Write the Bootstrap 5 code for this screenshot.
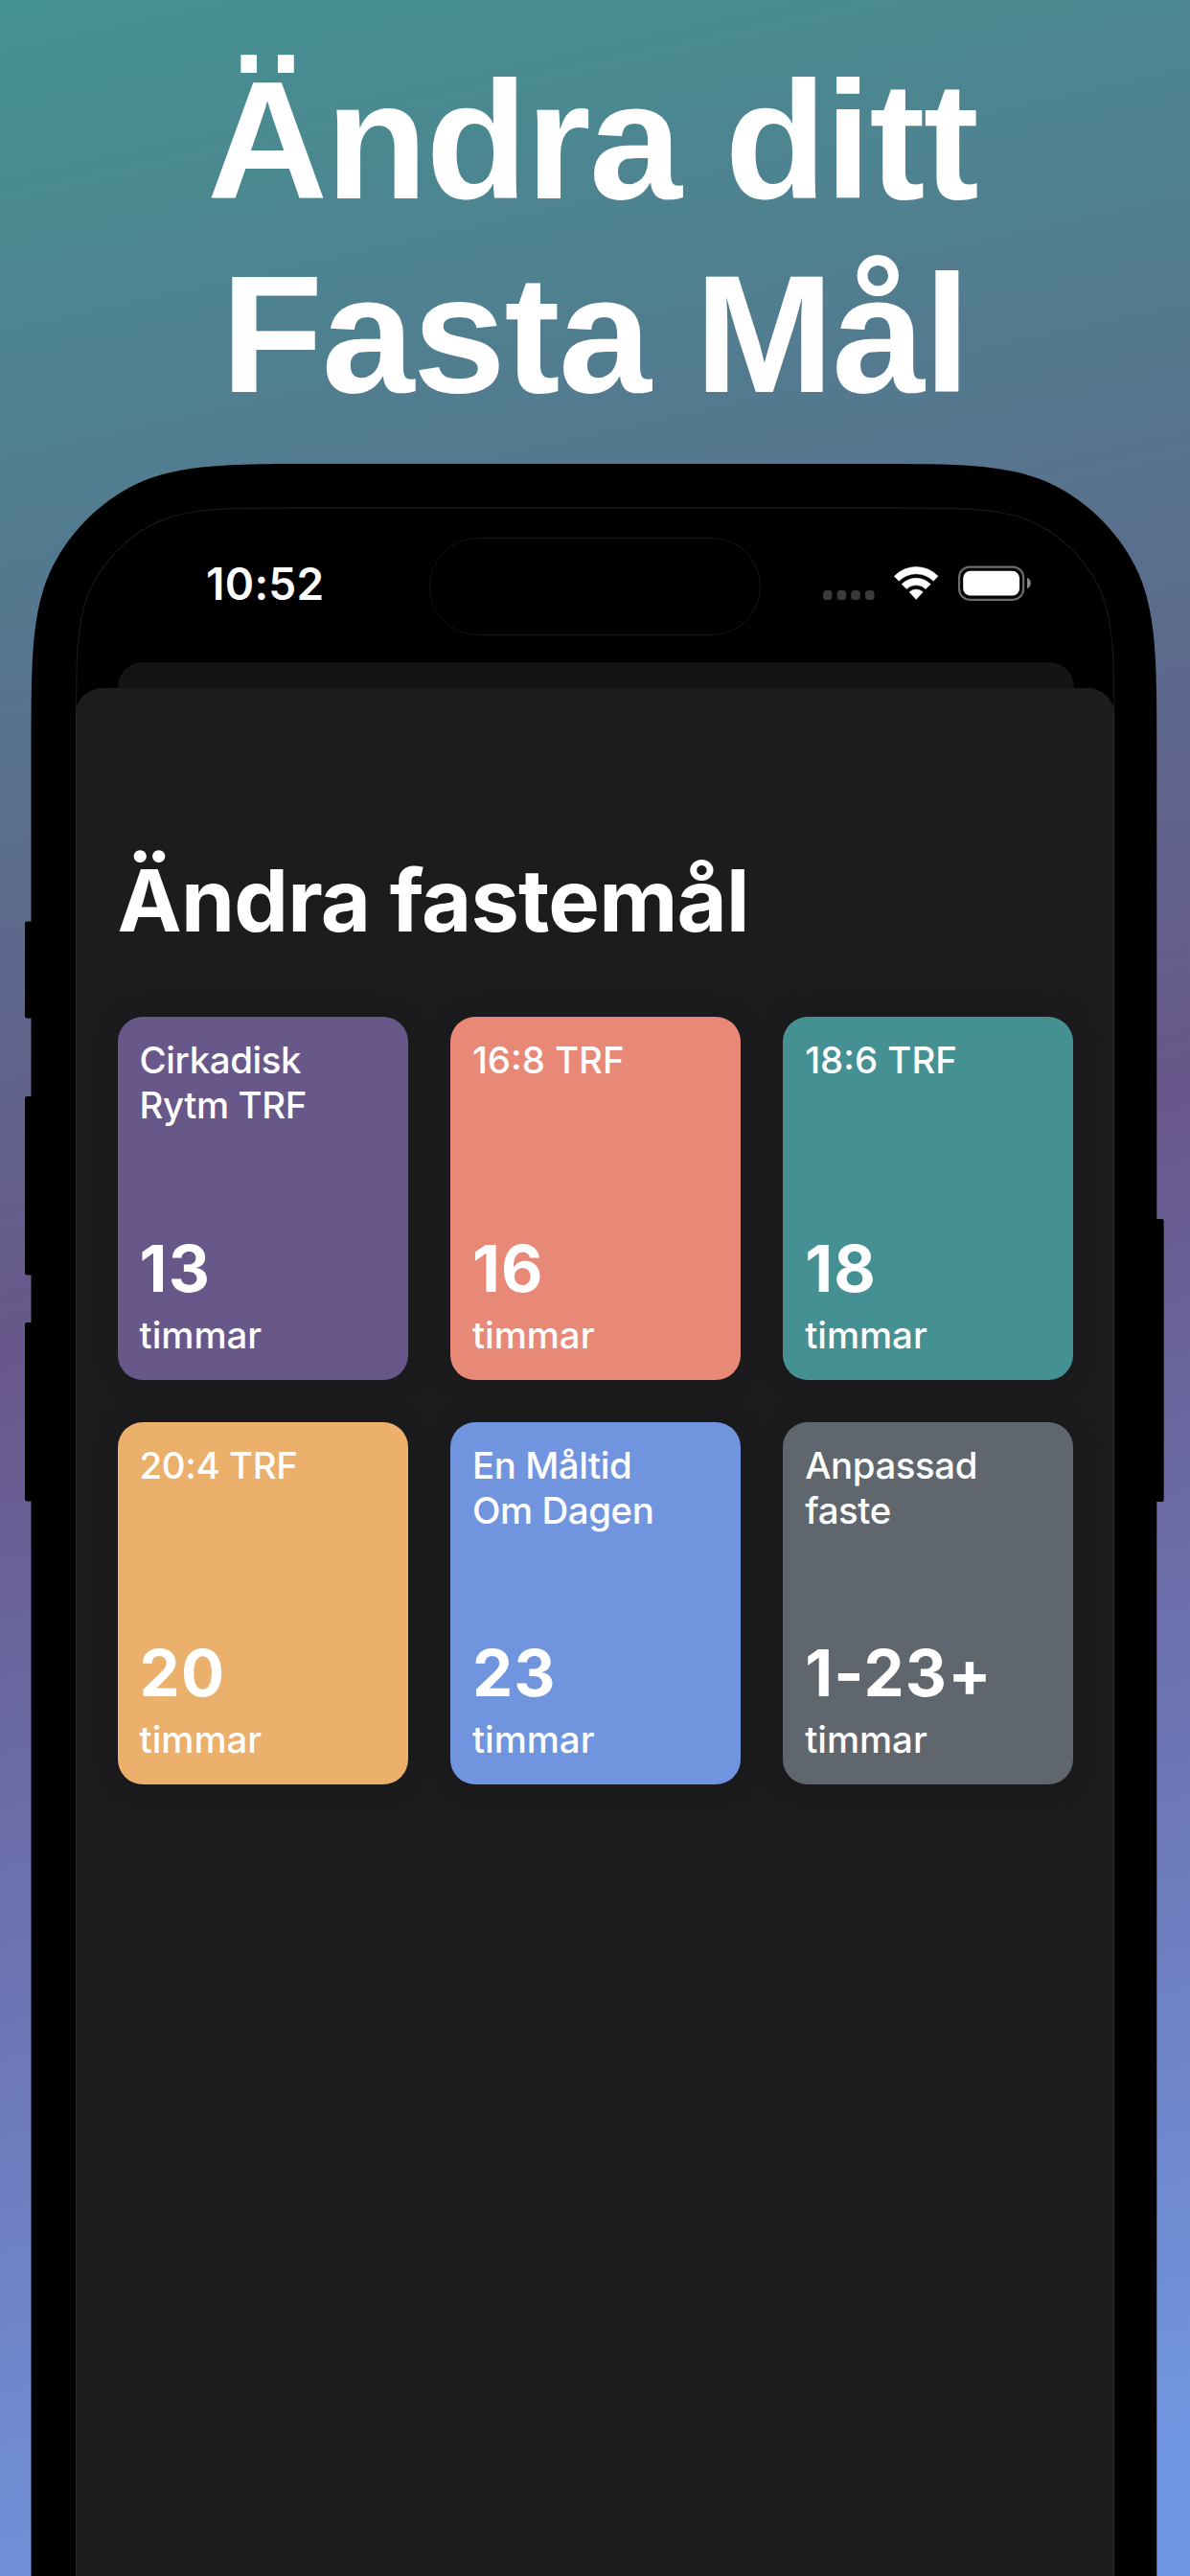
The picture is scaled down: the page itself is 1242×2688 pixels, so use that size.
<!DOCTYPE html>
<html lang="sv">
<head>
    <meta charset="UTF-8">
    <meta name="viewport" content="width=device-width, initial-scale=1.0">
    <title>Ändra ditt Fasta Mål</title>
    <link href="https://cdn.jsdelivr.net/npm/bootstrap@5.3.0/dist/css/bootstrap.min.css" rel="stylesheet">
    <style>
        body {
            height: 2688px;
            overflow: hidden;
            color: #fff;
            font-family: Inter, "Liberation Sans", sans-serif;
            background: linear-gradient(167.5deg, #459292 0.5%, #68578a 47.7%, #7196e1 95%);
        }
        .promo-title {
            height: 484px;
            padding-top: 45.5px;
            font: bold 174px/202.7px "Liberation Sans", Arial, sans-serif;
        }
        .promo-title .line-one { letter-spacing: -1.8px; padding-right: 6px; }
        .promo-title .line-two { letter-spacing: -1.4px; }

        /* Phone */
        .phone { height: 2204px; padding: 46px 79px 0 79px; }
        .bezel { position: absolute; left: 0; top: 0; z-index: -1; }
        .status-bar { height: 161px; padding: 31px 0 0 136px; }
        .clock { width: 233px; padding-bottom: 6px; font-size: 46px; line-height: 60px; font-weight: 600; letter-spacing: 0.3px; }
        .island { width: 346px; height: 102px; border: 1.5px solid #15151b; border-radius: 51px; }
        .status-icons { margin-left: 64px; margin-bottom: 7px; }

        /* Sheets */
        .sheet-back { height: 27px; margin: 0 42.5px 0 44px; background: #141414; border-radius: 26px 26px 0 0; }
        .sheet { height: 1970px; background: #1c1c1e; border: 1px solid #282833; border-width: 0 1px; border-radius: 28px 28px 0 0; padding: 168px 42px 0 42.6px; }
        .sheet h1 { font-size: 90px; line-height: 108px; font-weight: 700; letter-spacing: -0.8px; margin-bottom: 67px; }

        .goals { display: grid; grid-template-columns: repeat(3, 303px); gap: 44px 44.3px; }
        .goal { height: 378.6px; border-radius: 26px; padding: 22px 23px 23px; box-shadow: 0 0 30px rgba(0, 0, 0, .14); }
        .goal-label { font-size: 38.4px; line-height: 47px; font-weight: 500; }
        .goal-name { letter-spacing: -0.4px; }
        .goal-hours { font-size: 67px; line-height: 80px; font-weight: 700; letter-spacing: 1.2px; margin-bottom: 6px; }
        .purple { background: #68588a; }
        .coral { background: #e88876; }
        .teal { background: #459092; }
        .amber { background: #ebb06c; }
        .azure { background: #7194df; }
        .slate { background: #60666e; }
    </style>
</head>
<body>
    <header class="promo-title text-center">
        <div class="line-one">Ändra ditt</div>
        <div class="line-two">Fasta Mål</div>
    </header>

    <main class="phone position-relative">
        <!-- Body, side buttons and screen outline -->
        <svg class="bezel" width="1242" height="2204" viewBox="0 0 1242 2204">
            <rect x="26" y="477.5" width="20" height="101" rx="2"/>
            <rect x="26" y="660" width="20" height="186.5" rx="2"/>
            <rect x="26" y="896" width="20" height="186.5" rx="2"/>
            <rect x="1190" y="788" width="24.7" height="295" rx="2"/>
            <path d="M32.5 2210V301.1C32.5 214.4 32.5 166 48 123C66.3 74.8 107.3 33.8 155.500 15.500C198.500 0 246.900 0 333.600 0H906.200C992.900 0 1041.300 0 1084.300 15.500C1132.500 33.800 1173.500 74.800 1191.800 123C1207.300 166 1207.300 214.400 1207.300 301.100V2210Z"/>
            <path fill="none" stroke="#15171d" stroke-width="1.3" d="M79.5 2210V272.2C79.5 207.1 79.5 170.7 91.1 138.4C104.9 102.2 135.7 71.4 171.9 57.6C204.2 46 240.6 46 305.7 46H936.5C1001.6 46 1038 46 1070.3 57.6C1106.5 71.4 1137.3 102.2 1151.1 138.4C1162.7 170.7 1162.7 207.1 1162.7 272.2V2210Z"/>
        </svg>

        <div class="status-bar d-flex align-items-start">
            <div class="d-flex align-items-center">
                <div class="clock">10:52</div>
                <div class="island"></div>
                <svg class="status-icons" width="220" height="40" viewBox="857 589 220 40">
                    <g fill="#3a3a3a">
                        <rect x="858" y="616" width="9.5" height="10" rx="3.5"/>
                        <rect x="872.6" y="616" width="9.5" height="10" rx="3.5"/>
                        <rect x="887.3" y="616" width="9.5" height="10" rx="3.5"/>
                        <rect x="902" y="616" width="9.5" height="10" rx="3.5"/>
                    </g>
                    <g fill="#fff" stroke="#fff" stroke-width=".6" stroke-linejoin="round">
                        <path d="M932.4 601.3A31.5 31.5 0 0 1 978 601.3L973.2 606.2A25.5 25.5 0 0 0 937.2 606.2Z"/>
                        <path d="M940.2 609.6A21 21 0 0 1 970.2 609.6L965.2 614.5A14.5 14.5 0 0 0 945.2 614.500Z"/>
                        <path d="M948.2 617.7A10.5 10.5 0 0 1 962.2 617.700L955.2 625.400Z"/>
                    </g>
                    <rect x="1000.1" y="591.6" width="67" height="34.2" rx="11" fill="none" stroke="#6c6c6c" stroke-width="2.2"/>
                    <rect x="1004.2" y="595.8" width="58.9" height="25.7" rx="7.5" fill="#fff"/>
                    <path d="M1071 602.8Q1074.8 604.5 1074.8 608.500T1071 614.200Z" fill="#888"/>
                </svg>
            </div>
        </div>

        <div class="sheet-back"></div>
        <section class="sheet">
            <h1>Ändra fastemål</h1>
            <div class="goals">
                <div class="goal purple d-flex flex-column">
                    <div class="goal-label goal-name">Cirkadisk<br>Rytm TRF</div>
                    <div class="goal-hours mt-auto">13</div>
                    <div class="goal-label">timmar</div>
                </div>
                <div class="goal coral d-flex flex-column">
                    <div class="goal-label">16:8 TRF</div>
                    <div class="goal-hours mt-auto">16</div>
                    <div class="goal-label">timmar</div>
                </div>
                <div class="goal teal d-flex flex-column">
                    <div class="goal-label">18:6 TRF</div>
                    <div class="goal-hours mt-auto">18</div>
                    <div class="goal-label">timmar</div>
                </div>
                <div class="goal amber d-flex flex-column">
                    <div class="goal-label goal-name">20:4 TRF</div>
                    <div class="goal-hours mt-auto">20</div>
                    <div class="goal-label">timmar</div>
                </div>
                <div class="goal azure d-flex flex-column">
                    <div class="goal-label goal-name">En Måltid<br>Om Dagen</div>
                    <div class="goal-hours mt-auto">23</div>
                    <div class="goal-label">timmar</div>
                </div>
                <div class="goal slate d-flex flex-column">
                    <div class="goal-label goal-name">Anpassad<br>faste</div>
                    <div class="goal-hours mt-auto">1-23+</div>
                    <div class="goal-label">timmar</div>
                </div>
            </div>
        </section>
    </main>

    <script src="https://cdn.jsdelivr.net/npm/bootstrap@5.3.0/dist/js/bootstrap.bundle.min.js"></script>
</body>
</html>
